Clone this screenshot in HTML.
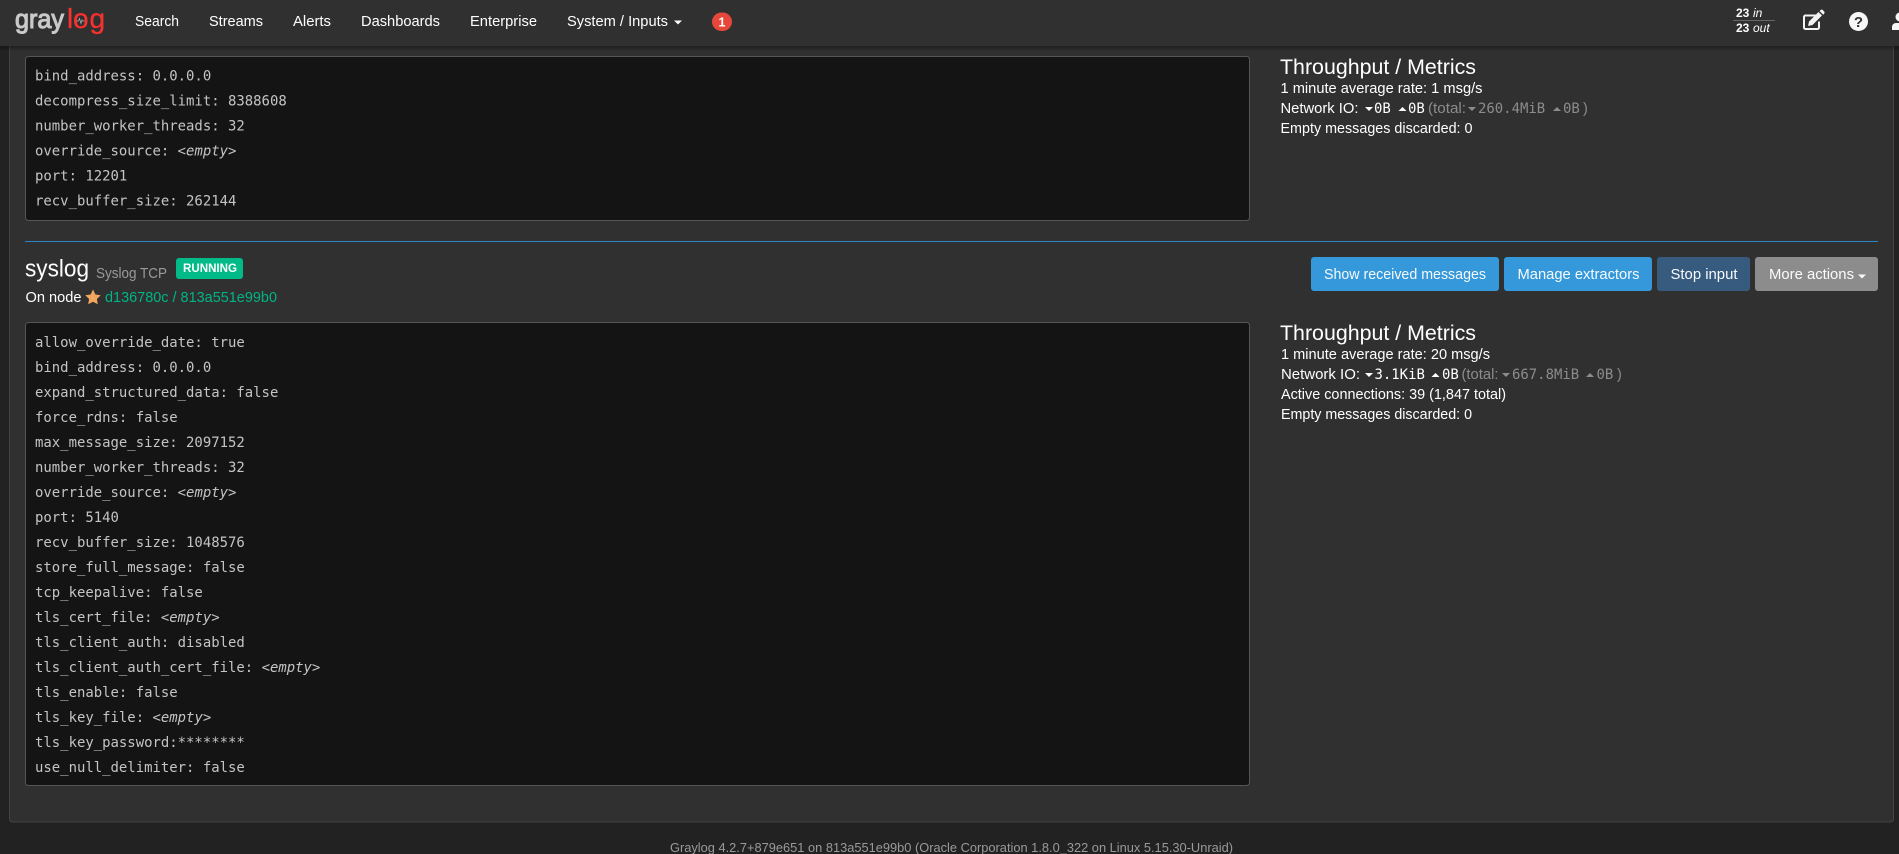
<!DOCTYPE html>
<html lang="en">
<head>
<meta charset="utf-8">
<title>Graylog - Inputs</title>
<style>
html,body{margin:0;padding:0;width:1899px;height:854px;overflow:hidden;background:#222}
svg{display:block;position:absolute;left:0;top:0}
.s{font-family:"Liberation Sans",sans-serif;font-size:14.5px;fill:#fff}
.m{font-family:"DejaVu Sans Mono",monospace;font-size:13.95px;fill:#c4c4c4}
.w{fill:#fff}
.g{fill:#8c8c8c}
.i{font-style:italic}
.b{font-weight:bold}
.h{font-size:21px;fill:#fff}
</style>
</head>
<body>
<svg width="1899" height="854" viewBox="0 0 1899 854" xmlns="http://www.w3.org/2000/svg">
<defs>
<linearGradient id="sh" x1="0" y1="0" x2="0" y2="1"><stop offset="0" stop-color="#000" stop-opacity=".35"/><stop offset="1" stop-color="#000" stop-opacity="0"/></linearGradient>
</defs>
<rect width="1899" height="854" fill="#222"/>
<rect x="9.5" y="-10" width="1884" height="832" rx="3" fill="#303030" stroke="#444"/>

<!-- first input config -->
<rect x="25.5" y="56.5" width="1224" height="164" rx="3" fill="#141414" stroke="#555"/>
<g class="m" transform="translate(0,-0.5)">
<text x="35" y="81">bind_address: 0.0.0.0</text>
<text x="35" y="106">decompress_size_limit: 8388608</text>
<text x="35" y="131">number_worker_threads: 32</text>
<text x="35" y="156">override_source: <tspan class="i">&lt;empty&gt;</tspan></text>
<text x="35" y="181">port: 12201</text>
<text x="35" y="206">recv_buffer_size: 262144</text>
</g>

<!-- first metrics -->
<text class="s h" x="1280" y="74" textLength="196" lengthAdjust="spacingAndGlyphs">Throughput / Metrics</text>
<text class="s" x="1280.5" y="93" textLength="202" lengthAdjust="spacingAndGlyphs">1 minute average rate: 1 msg/s</text>
<text class="s" x="1280.5" y="113" textLength="78" lengthAdjust="spacingAndGlyphs">Network IO:</text>
<path d="M1365 107h8l-4 4z" fill="#fff"/>
<text class="m w" x="1374" y="113">0B</text>
<path d="M1398.500 111h8l-4-4z" fill="#fff"/>
<text class="m w" x="1408" y="113">0B</text>
<text class="s g" x="1428" y="113" textLength="38" lengthAdjust="spacingAndGlyphs">(total:</text>
<path d="M1468 107h8l-4 4z" fill="#8c8c8c"/>
<text class="m g" x="1478" y="113">260.4MiB</text>
<path d="M1553 111h8l-4-4z" fill="#8c8c8c"/>
<text class="m g" x="1563" y="113">0B</text>
<text class="s g" x="1583" y="113">)</text>
<text class="s" x="1280.500" y="133" textLength="192" lengthAdjust="spacingAndGlyphs">Empty messages discarded: 0</text>

<!-- divider -->
<rect x="25" y="241" width="1853" height="1" fill="#2f86c4"/>

<!-- second input header -->
<text class="s" x="25" y="276.500" style="font-size:24px;fill:#fff" textLength="64" lengthAdjust="spacingAndGlyphs">syslog</text>
<text class="s" x="96" y="278" style="font-size:14.5px;fill:#9a9a9a" textLength="71" lengthAdjust="spacingAndGlyphs">Syslog TCP</text>
<rect x="176" y="258" width="67" height="21" rx="3" fill="#00bb88"/>
<text class="s b" x="183" y="272" style="font-size:12px;fill:#fff" textLength="54" lengthAdjust="spacingAndGlyphs">RUNNING</text>
<text class="s" x="25.500" y="302" textLength="56" lengthAdjust="spacingAndGlyphs">On node</text>
<path d="M93 289.500l2.400 5 5.300 .8-3.800 3.700 .9 5.300-4.800-2.500-4.800 2.500 .9-5.300-3.800-3.700 5.300-.8z" fill="#f2a65e"/>
<text class="s" x="105" y="302" style="fill:#00b585" textLength="172" lengthAdjust="spacingAndGlyphs">d136780c / 813a551e99b0</text>

<!-- buttons -->
<rect x="1311" y="257" width="188" height="34" rx="3" fill="#3498db"/>
<text class="s" x="1324" y="279" style="fill:#f6fafd" textLength="162" lengthAdjust="spacingAndGlyphs">Show received messages</text>
<rect x="1504" y="257" width="148" height="34" rx="3" fill="#3498db"/>
<text class="s" x="1517.500" y="279" style="fill:#f6fafd" textLength="122" lengthAdjust="spacingAndGlyphs">Manage extractors</text>
<rect x="1657" y="257" width="93" height="34" rx="3" fill="#375a7f"/>
<text class="s" x="1670.500" y="279" style="fill:#f6fafd" textLength="67" lengthAdjust="spacingAndGlyphs">Stop input</text>
<rect x="1755" y="257" width="123" height="34" rx="3" fill="#8c8c8c"/>
<text class="s" x="1769" y="279" style="fill:#fafafa" textLength="85" lengthAdjust="spacingAndGlyphs">More actions</text>
<path d="M1858 274.500h8l-4 4z" fill="#fafafa"/>

<!-- second input config -->
<rect x="25.500" y="322.500" width="1224" height="463" rx="3" fill="#141414" stroke="#555"/>
<g class="m">
<text x="35" y="347">allow_override_date: true</text>
<text x="35" y="372">bind_address: 0.0.0.0</text>
<text x="35" y="397">expand_structured_data: false</text>
<text x="35" y="422">force_rdns: false</text>
<text x="35" y="447">max_message_size: 2097152</text>
<text x="35" y="472">number_worker_threads: 32</text>
<text x="35" y="497">override_source: <tspan class="i">&lt;empty&gt;</tspan></text>
<text x="35" y="522">port: 5140</text>
<text x="35" y="547">recv_buffer_size: 1048576</text>
<text x="35" y="572">store_full_message: false</text>
<text x="35" y="597">tcp_keepalive: false</text>
<text x="35" y="622">tls_cert_file: <tspan class="i">&lt;empty&gt;</tspan></text>
<text x="35" y="647">tls_client_auth: disabled</text>
<text x="35" y="672">tls_client_auth_cert_file: <tspan class="i">&lt;empty&gt;</tspan></text>
<text x="35" y="697">tls_enable: false</text>
<text x="35" y="722">tls_key_file: <tspan class="i">&lt;empty&gt;</tspan></text>
<text x="35" y="747">tls_key_password:********</text>
<text x="35" y="772">use_null_delimiter: false</text>
</g>

<!-- second metrics -->
<text class="s h" x="1280" y="340" textLength="196" lengthAdjust="spacingAndGlyphs">Throughput / Metrics</text>
<text class="s" x="1281" y="359" textLength="209" lengthAdjust="spacingAndGlyphs">1 minute average rate: 20 msg/s</text>
<text class="s" x="1281" y="379" textLength="79" lengthAdjust="spacingAndGlyphs">Network IO:</text>
<path d="M1365 373h8l-4 4z" fill="#fff"/>
<text class="m w" x="1374.500" y="379">3.1KiB</text>
<path d="M1431.500 377h8l-4-4z" fill="#fff"/>
<text class="m w" x="1442" y="379">0B</text>
<text class="s g" x="1461.500" y="379" textLength="37" lengthAdjust="spacingAndGlyphs">(total:</text>
<path d="M1502 373h8l-4 4z" fill="#8c8c8c"/>
<text class="m g" x="1512" y="379">667.8MiB</text>
<path d="M1586 377h8l-4-4z" fill="#8c8c8c"/>
<text class="m g" x="1596.500" y="379">0B</text>
<text class="s g" x="1617" y="379">)</text>
<text class="s" x="1281" y="399" textLength="225" lengthAdjust="spacingAndGlyphs">Active connections: 39 (1,847 total)</text>
<text class="s" x="1281" y="419" textLength="191" lengthAdjust="spacingAndGlyphs">Empty messages discarded: 0</text>

<!-- footer -->
<text class="s" x="670" y="852" style="font-size:12.500px;fill:#9a9a9a" textLength="563" lengthAdjust="spacingAndGlyphs">Graylog 4.2.7+879e651 on 813a551e99b0 (Oracle Corporation 1.8.0_322 on Linux 5.15.30-Unraid)</text>

<!-- navbar -->
<rect y="46" width="1899" height="5" fill="url(#sh)"/>
<rect width="1899" height="46" fill="#303030"/>
<text x="15" y="28" style="font-family:'Liberation Sans',sans-serif;font-size:27px;fill:#c9c9c9;stroke:#c9c9c9;stroke-width:1.1" textLength="49" lengthAdjust="spacingAndGlyphs">gray</text>
<text x="67 73 89.500" y="28" style="font-family:'Liberation Sans',sans-serif;font-size:28px;fill:#f8302e;stroke:#f8302e;stroke-width:.3">log</text>
<path d="M76.500 21h2l1-2.500 1.500 5 1-3.500 .8 1h2" fill="none" stroke="#aaa" stroke-width=".8"/>

<text class="s" x="135" y="26" textLength="44" lengthAdjust="spacingAndGlyphs">Search</text>
<text class="s" x="209" y="26" textLength="54" lengthAdjust="spacingAndGlyphs">Streams</text>
<text class="s" x="293" y="26" textLength="38" lengthAdjust="spacingAndGlyphs">Alerts</text>
<text class="s" x="361" y="26" textLength="79" lengthAdjust="spacingAndGlyphs">Dashboards</text>
<text class="s" x="470" y="26" textLength="67" lengthAdjust="spacingAndGlyphs">Enterprise</text>
<text class="s" x="567" y="26" textLength="101" lengthAdjust="spacingAndGlyphs">System / Inputs</text>
<path d="M674 20.500h8l-4 4z" fill="#fff"/>
<rect x="712" y="12.500" width="20" height="18.500" rx="9.250" fill="#e5483a"/>
<text class="s b" x="722" y="26.500" text-anchor="middle" style="font-size:12.500px;fill:#fff">1</text>

<text x="1736" y="17" style="font-family:'Liberation Sans',sans-serif;font-size:12px;fill:#fff"><tspan font-weight="bold">23</tspan><tspan x="1753" font-style="italic">in</tspan></text>
<rect x="1733" y="20" width="42" height="1" fill="#666"/>
<text x="1736" y="32" style="font-family:'Liberation Sans',sans-serif;font-size:12px;fill:#fff"><tspan font-weight="bold">23</tspan><tspan x="1753" font-style="italic">out</tspan></text>

<!-- edit icon -->
<path d="M1816 15.500h-10.500a1.500 1.500 0 0 0-1.500 1.500v10.500a1.500 1.500 0 0 0 1.500 1.500h12a1.500 1.500 0 0 0 1.500-1.500v-6" fill="none" stroke="#f4f4f4" stroke-width="2"/>
<path d="M1809 21.500l9.500-9.500 3.500 3.500-9.500 9.500-4.500 1z" fill="#f4f4f4"/>
<path d="M1819.500 11l1.200-1a1.500 1.500 0 0 1 2 0l1.500 1.500a1.500 1.500 0 0 1 0 2l-1 1.200z" fill="#f4f4f4"/>
<!-- help icon -->
<circle cx="1858.500" cy="21.500" r="9.500" fill="#f7f7f7"/>
<text x="1858.500" y="27" text-anchor="middle" style="font-family:'Liberation Sans',sans-serif;font-size:15px;font-weight:bold;fill:#303030">?</text>
<!-- user icon -->
<circle cx="1900" cy="17" r="4.500" fill="#f7f7f7"/>
<path d="M1892 30v-3a4 4 0 0 1 4-4h8a4 4 0 0 1 4 4v3z" fill="#f7f7f7"/>
</svg>
</body>
</html>
